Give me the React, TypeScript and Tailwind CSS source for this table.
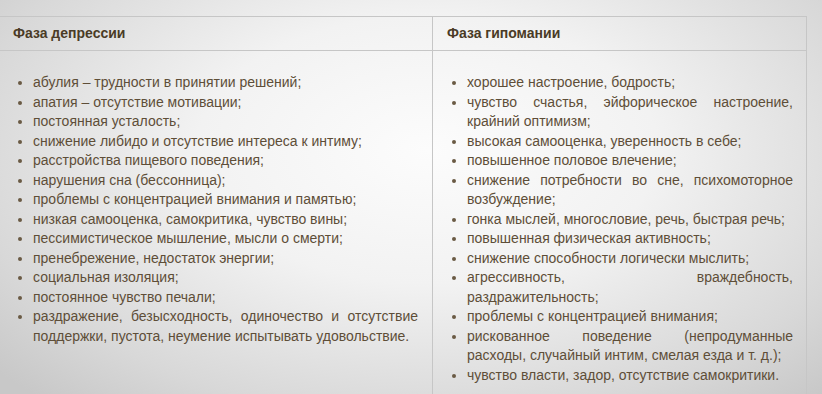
const DEPRESSION = [
  'абулия – трудности в принятии решений;',
  'апатия – отсутствие мотивации;',
  'постоянная усталость;',
  'снижение либидо и отсутствие интереса к интиму;',
  'расстройства пищевого поведения;',
  'нарушения сна (бессонница);',
  'проблемы с концентрацией внимания и памятью;',
  'низкая самооценка, самокритика, чувство вины;',
  'пессимистическое мышление, мысли о смерти;',
  'пренебрежение, недостаток энергии;',
  'социальная изоляция;',
  'постоянное чувство печали;',
  'раздражение, безысходность, одиночество и отсутствие поддержки, пустота, неумение испытывать удовольствие.',
];

const HYPOMANIA = [
  'хорошее настроение, бодрость;',
  'чувство счастья, эйфорическое настроение, крайний оптимизм;',
  'высокая самооценка, уверенность в себе;',
  'повышенное половое влечение;',
  'снижение потребности во сне, психомоторное возбуждение;',
  'гонка мыслей, многословие, речь, быстрая речь;',
  'повышенная физическая активность;',
  'снижение способности логически мыслить;',
  'агрессивность, враждебность, раздражительность;',
  'проблемы с концентрацией внимания;',
  'рискованное поведение (непродуманные расходы, случайный интим, смелая езда и т. д.);',
  'чувство власти, задор, отсутствие самокритики.',
];

function SymptomList({ items }: { items: string[] }) {
  return (
    <ul className="list-disc pl-[20px] marker:text-[#6a5a44]">
      {items.map((s) => (
        <li key={s} className="text-justify">
          {s}
        </li>
      ))}
    </ul>
  );
}

export default function App() {
  return (
    <div
      className="h-[394px] w-[822px] overflow-hidden bg-[radial-gradient(ellipse_70%_85%_at_52%_38%,#fcfcfc_0%,#f2f2f2_40%,#d8d8d8_80%,#c8c8c8_100%)] pt-[16px] text-[14px] leading-[19.5px] text-[#5e4e38]"
      style={{ fontFamily: '"Liberation Sans", Arial, sans-serif' }}
    >
      <div className="grid w-[807px] grid-cols-[433px_374px] border-t border-r border-[#c6c6c6]">
        <div className="flex h-[34px] items-center border-r border-b border-[#c6c6c6] pl-[13px] pt-px font-bold text-[#4a3b26]">
          Фаза депрессии
        </div>
        <div className="flex h-[34px] items-center border-b border-[#c6c6c6] pl-[14px] pt-px font-bold text-[#4a3b26]">
          Фаза гипомании
        </div>
        <div className="h-[360px] border-r border-[#c6c6c6] pt-[22px] pl-[13px] pr-[14px]">
          <SymptomList items={DEPRESSION} />
        </div>
        <div className="h-[360px] pt-[22px] pl-[14px] pr-[14px]">
          <SymptomList items={HYPOMANIA} />
        </div>
      </div>
    </div>
  );
}
